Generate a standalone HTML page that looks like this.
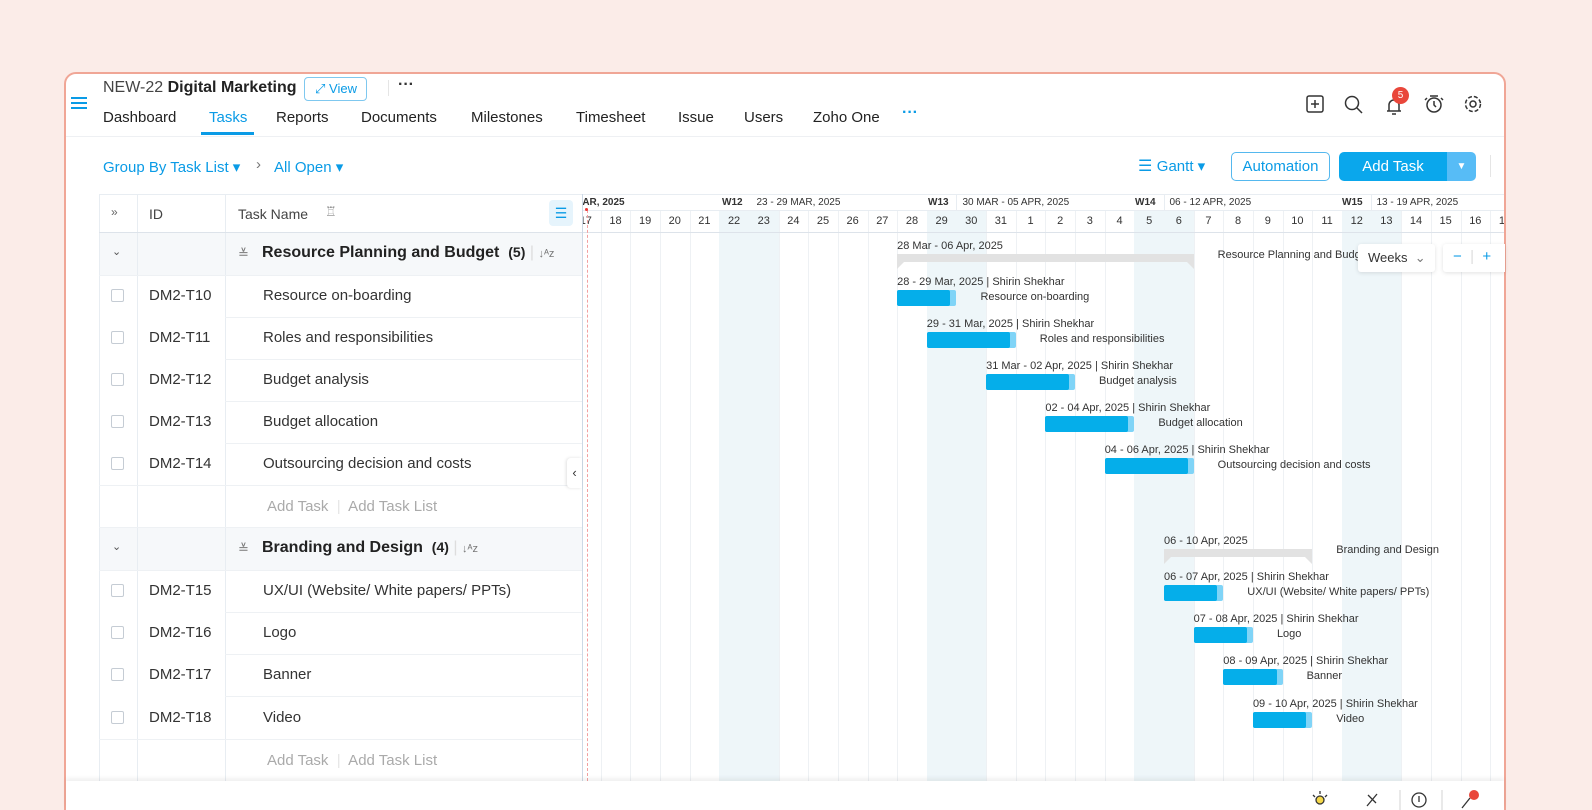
<!DOCTYPE html>
<html><head><meta charset="utf-8"><style>
*{box-sizing:border-box;margin:0;padding:0}
html,body{width:1592px;height:810px;overflow:hidden}
body{background:#fbece8;font-family:"Liberation Sans",sans-serif;color:#222}
#wrap{position:relative;width:1592px;height:810px;overflow:hidden}
.card{position:absolute;left:64px;top:72px;width:1442px;height:760px;background:#fff;border:2px solid #f0a696;border-radius:12px;overflow:hidden}
.a{position:absolute;white-space:nowrap}
.tab{position:absolute;top:109px;font-size:15px;color:#222}
.blue{color:#0a9be6}
.hl{position:absolute;height:1px;background:#e8edf2}
.vl{position:absolute;width:1px;background:#e8edf2}
.cb{position:absolute;width:13px;height:13px;border:1px solid #c5ccd4;border-radius:2px;background:#fff}
.g11{font-size:11px;color:#333}
</style></head><body>
<div id="wrap">
<div class="card"></div>
<div class="a" style="left:71px;top:97px;width:16px;height:2px;background:#0a9be6;box-shadow:0 5px 0 #0a9be6,0 10px 0 #0a9be6"></div>
<div class="a" style="left:103px;top:79px;font-size:16px;color:#444">NEW-22 <span style="color:#222;font-weight:600">Digital Marketing</span></div>
<div class="a" style="left:304px;top:77px;width:63px;height:24px;border:1px solid #7fc8ef;border-radius:4px;font-size:13px;color:#0a9be6;padding:3px 0 0 10px">⤢ View</div>
<div class="a" style="left:388px;top:80px;width:1px;height:16px;background:#e5e5e5"></div>
<div class="a" style="left:398px;top:76px;font-size:16px;font-weight:bold;color:#333">···</div>
<div class="tab" style="left:103px">Dashboard</div>
<div class="tab blue" style="left:209px">Tasks</div>
<div class="a" style="left:201px;top:132px;width:53px;height:3px;background:#0a9be6"></div>
<div class="tab" style="left:276px">Reports</div>
<div class="tab" style="left:361px">Documents</div>
<div class="tab" style="left:471px">Milestones</div>
<div class="tab" style="left:576px">Timesheet</div>
<div class="tab" style="left:678px">Issue</div>
<div class="tab" style="left:744px">Users</div>
<div class="tab" style="left:813px">Zoho One</div>
<div class="tab blue" style="left:902px;top:104px;font-weight:bold;font-size:16px">···</div>
<div class="hl" style="left:66px;top:136px;width:1438px;background:#eef0f3"></div>
<svg class="a" style="left:1300px;top:92px" width="190" height="26" fill="none" stroke="#333" stroke-width="1.5">
<rect x="7" y="4" width="16" height="16" rx="2"/><path d="M15 8v8M11 12h8"/>
<circle cx="52" cy="11" r="6.5"/><path d="M57 16l5 5"/>
<path d="M87 19h14M89 19v-6a5 5 0 0 1 10 0v6M92 22h4"/>
<circle cx="134" cy="13" r="7"/><path d="M134 9v4l2 2M130 4h8M127 6l-2 2M141 6l2 2"/>
<circle cx="173" cy="12" r="3"/><circle cx="173" cy="12" r="7.5" stroke-dasharray="4 2"/>
</svg>
<div class="a" style="left:1392px;top:87px;width:17px;height:17px;border-radius:50%;background:#e9473b;color:#fff;font-size:10px;text-align:center;line-height:17px">5</div>
<div class="a blue" style="left:103px;top:158px;font-size:15px">Group By Task List ▾</div>
<div class="a" style="left:256px;top:156px;font-size:15px;color:#777">›</div>
<div class="a blue" style="left:274px;top:158px;font-size:15px">All Open ▾</div>
<div class="a blue" style="left:1138px;top:156px;font-size:16px">☰ <span style="font-size:15px">Gantt ▾</span></div>
<div class="a blue" style="left:1231px;top:152px;width:99px;height:29px;border:1px solid #55b8ee;border-radius:5px;font-size:15px;text-align:center;line-height:27px">Automation</div>
<div class="a" style="left:1339px;top:152px;width:108px;height:29px;background:#0aa7ec;border-radius:5px 0 0 5px;color:#fff;font-size:15px;text-align:center;line-height:29px">Add Task</div>
<div class="a" style="left:1447px;top:152px;width:29px;height:29px;background:#57bcf6;border-radius:0 5px 5px 0;color:#fff;font-size:10px;text-align:center;line-height:29px">▼</div>
<div class="a" style="left:1490px;top:155px;width:1px;height:22px;background:#e5e5e5"></div>
<div class="a" style="left:111px;top:205px;font-size:12px;color:#666">»</div>
<div class="a" style="left:149px;top:206px;font-size:14px;color:#444">ID</div>
<div class="a" style="left:238px;top:206px;font-size:14px;color:#444">Task Name</div>
<div class="a" style="left:325px;top:204px;font-size:13px;color:#888">♖</div>
<div class="a" style="left:549px;top:200px;width:24px;height:26px;background:#e6f4fc;border-radius:4px;color:#0a9be6;font-size:14px;text-align:center;line-height:26px">☰</div>
<div id="gen"></div>
<div class="a" style="left:66px;top:781px;width:1438px;height:29px;background:#fff;box-shadow:0 -3px 4px rgba(0,0,0,0.06)"></div>
<svg class="a" style="left:1300px;top:786px" width="190" height="24" fill="none" stroke="#333" stroke-width="1.3">
<circle cx="20" cy="14" r="4" fill="#f5d84a"/><path d="M20 5v3M13 9l2 2M27 9l-2 2"/>
<path d="M67 20l10-12M68 9l8 8"/><line x1="100" y1="4" x2="100" y2="24" stroke="#ddd"/>
<circle cx="119" cy="14" r="7"/><path d="M119 10v6"/><line x1="142" y1="4" x2="142" y2="24" stroke="#ddd"/>
<path d="M162 22l8-10"/><circle cx="174" cy="9" r="5" fill="#e9473b" stroke="none"/>
</svg>
</div>
<script>
const G=document.getElementById('gen');let h='';
function d(s){h+=s}
d('<div class="hl" style="left:99px;top:194px;width:1405px"></div>');
d('<div class="vl" style="left:99px;top:194px;height:587px"></div>');
d('<div class="vl" style="left:137px;top:194px;height:587px"></div>');
d('<div class="vl" style="left:225px;top:194px;height:587px"></div>');
d('<div class="hl" style="left:99px;top:232px;width:483px;background:#dde3ea"></div>');
const rows=[['g','Resource Planning and Budget','5'],['t','DM2-T10','Resource on-boarding'],['t','DM2-T11','Roles and responsibilities'],['t','DM2-T12','Budget analysis'],['t','DM2-T13','Budget allocation'],['t','DM2-T14','Outsourcing decision and costs'],['a'],
['g','Branding and Design','4'],['t','DM2-T15','UX/UI (Website/ White papers/ PPTs)'],['t','DM2-T16','Logo'],['t','DM2-T17','Banner'],['t','DM2-T18','Video'],['a']];
const tops=[233,275,317,359,401,443,485,528,570,612,654,697,739];
rows.forEach((r,i)=>{const y=tops[i];
 if(r[0]=='g'){d(`<div class="a" style="left:100px;top:${y}px;width:482px;height:42px;background:#f6f8fa"></div><div class="vl" style="left:137px;top:${y}px;height:42px"></div><div class="vl" style="left:225px;top:${y}px;height:42px"></div>
 <div class="a" style="left:112px;top:${y+12}px;font-size:11px;color:#555">⌄</div>
 <div class="a" style="left:238px;top:${y+13}px;font-size:13px;color:#777">≚</div>
 <div class="a" style="left:262px;top:${y+11}px;font-size:16px;font-weight:600;color:#222">${r[1]} &nbsp;<span style="font-size:14px">(${r[2]})</span> <span style="color:#ddd;font-weight:normal">|</span> <span style="font-size:11px;color:#777;font-weight:normal">↓ᴬᴢ</span></div>`);}
 if(r[0]=='t'){d(`<div class="cb" style="left:111px;top:${y+14}px"></div><div class="a" style="left:149px;top:${y+12}px;font-size:15px;color:#333">${r[1]}</div><div class="a" style="left:263px;top:${y+12}px;font-size:15px;color:#333">${r[2]}</div>`);}
 if(r[0]=='a'){d(`<div class="a" style="left:267px;top:${y+13}px;font-size:15px;color:#aaa">Add Task <span style="color:#e5e5e5">&nbsp;|&nbsp;</span> Add Task List</div>`);}
 d(`<div class="hl" style="left:${r[0]=='t'&&i!=5&&i!=11?225:99}px;top:${y+42}px;width:${r[0]=='t'&&i!=5&&i!=11?357:483}px;background:#eef1f4"></div>`);
});
const W=29.65,X0=571;
d('<div class="a" style="left:582px;top:194px;width:922px;height:587px;overflow:hidden">');
const days=[17,18,19,20,21,22,23,24,25,26,27,28,29,30,31,1,2,3,4,5,6,7,8,9,10,11,12,13,14,15,16,17];
const sh=[5,6,12,13,19,20,26,27];
days.forEach((n,i)=>{const x=X0+i*W-582;
 if(sh.includes(i))d(`<div class="a" style="left:${x}px;top:16px;width:${W}px;height:571px;background:#eef6f9"></div>`);
 d(`<div class="vl" style="left:${x+W}px;top:16px;height:571px;background:#eef1f4"></div>`);
 d(`<div class="a g11" style="left:${x}px;top:21px;width:${W}px;text-align:center;color:#333">${n}</div>`);
});
d('<div class="hl" style="left:0;top:16px;width:922px"></div><div class="hl" style="left:0;top:38px;width:922px;background:#dde3ea"></div>');
[[ -8,'MAR, 2025',''],[140,'W12','23 - 29 MAR, 2025'],[346,'W13','30 MAR - 05 APR, 2025'],[553,'W14','06 - 12 APR, 2025'],[760,'W15','13 - 19 APR, 2025']].forEach(w=>{
 d(`<div class="a" style="left:${w[0]}px;top:3px;font-size:10px;color:#333"><b>${w[1]}</b>&nbsp;&nbsp;&nbsp;&nbsp;&nbsp;${w[2]}</div>`);});
[374,582,789].forEach(x=>d(`<div class="vl" style="left:${x}px;top:0;height:16px"></div>`));
d('<div class="a" style="left:5px;top:16px;height:571px;border-left:1px dashed #f2a0a0"></div><div class="a" style="left:3px;top:14px;width:3px;height:3px;background:#e33;border-radius:50%"></div>');
d('</div>');
d('<div class="vl" style="left:582px;top:194px;height:587px;background:#cdd9e6"></div>');
d('<div class="a" style="left:567px;top:458px;width:15px;height:30px;background:#fff;box-shadow:-1px 0 3px rgba(0,0,0,0.12);border-radius:4px 0 0 4px;font-size:13px;color:#333;text-align:center;line-height:30px">‹</div>');
function px(i){return X0+i*W}
function grp(i0,i1,y,lab,name){const x=px(i0),w=(i1-i0)*W;
 d(`<div class="a g11" style="left:${x}px;top:${y-14}px">${lab}</div><div class="a" style="left:${x}px;top:${y}px;width:${w}px;height:8px;background:#e2e2e2"></div>
 <div class="a" style="left:${x}px;top:${y+8}px;border-left:7px solid #e2e2e2;border-bottom:7px solid transparent"></div><div class="a" style="left:${x+w-7}px;top:${y+8}px;border-right:7px solid #e2e2e2;border-bottom:7px solid transparent"></div>
 <div class="a g11" style="left:${x+w+24}px;top:${y-5}px">${name}</div>`);}
function bar(i0,i1,y,lab,name){const x=px(i0),w=(i1-i0)*W;
 d(`<div class="a g11" style="left:${x}px;top:${y-14}px">${lab}</div><div class="a" style="left:${x}px;top:${y}px;width:${w}px;height:16px;background:#80d4f7;border-radius:2px"></div><div class="a" style="left:${x}px;top:${y}px;width:${w-6}px;height:16px;background:#05aeea;border-radius:2px"></div>
 <div class="a g11" style="left:${x+w+24}px;top:${y+1}px">${name}</div>`);}
grp(11,21,254,'28 Mar - 06 Apr, 2025','Resource Planning and Budg');
bar(11,13,290,'28 - 29 Mar, 2025 | Shirin Shekhar','Resource on-boarding');
bar(12,15,332,'29 - 31 Mar, 2025 | Shirin Shekhar','Roles and responsibilities');
bar(14,17,374,'31 Mar - 02 Apr, 2025 | Shirin Shekhar','Budget analysis');
bar(16,19,416,'02 - 04 Apr, 2025 | Shirin Shekhar','Budget allocation');
bar(18,21,458,'04 - 06 Apr, 2025 | Shirin Shekhar','Outsourcing decision and costs');
grp(20,25,549,'06 - 10 Apr, 2025','Branding and Design');
bar(20,22,585,'06 - 07 Apr, 2025 | Shirin Shekhar','UX/UI (Website/ White papers/ PPTs)');
bar(21,23,627,'07 - 08 Apr, 2025 | Shirin Shekhar','Logo');
bar(22,24,669,'08 - 09 Apr, 2025 | Shirin Shekhar','Banner');
bar(23,25,712,'09 - 10 Apr, 2025 | Shirin Shekhar','Video');
d('<div class="a" style="left:1358px;top:244px;width:77px;height:28px;background:#fff;box-shadow:0 1px 4px rgba(0,0,0,0.12);border-radius:3px;font-size:13px;color:#333;padding:6px 0 0 10px">Weeks &nbsp;<span style="color:#777">⌄</span></div>');
d('<div class="a" style="left:1443px;top:244px;width:62px;height:28px;background:#fff;box-shadow:0 1px 4px rgba(0,0,0,0.12);border-radius:3px 0 0 3px;font-size:15px;color:#0a9be6;padding:4px 0 0 10px">−&nbsp;&nbsp;<span style="color:#ddd">|</span>&nbsp;&nbsp;+</div>');
G.innerHTML=h;
</script>
</body></html>
